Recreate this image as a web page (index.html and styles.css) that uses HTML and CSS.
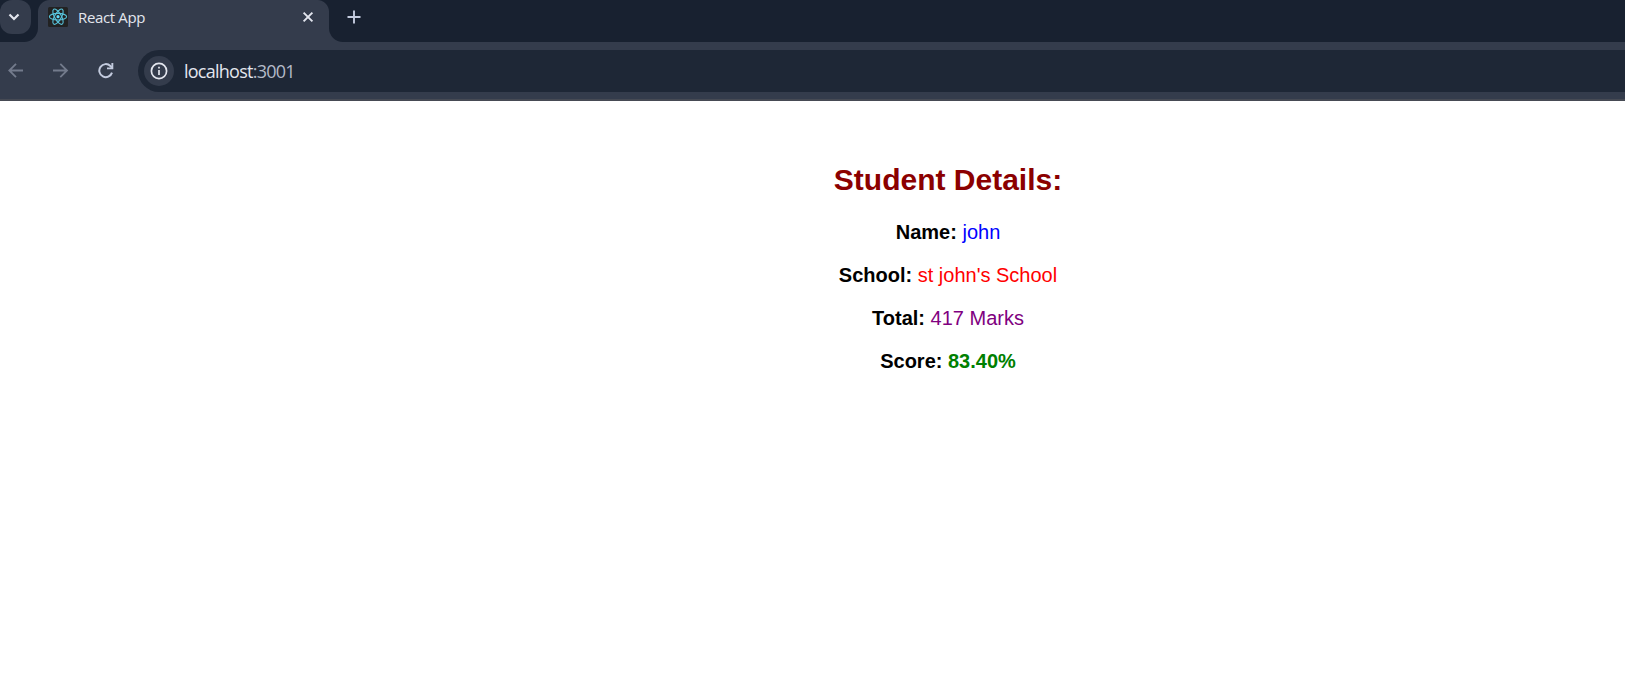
FILE: index.html
```html
<!DOCTYPE html>
<html lang="en">
<head>
<meta charset="utf-8">
<title>React App</title>
<link rel="stylesheet" href="styles.css">
</head>
<body>
<header class="browser">
  <div class="tab-strip">
    <div class="strip-left">
      <div class="tab-search">
        <svg width="31" height="34" viewBox="0 0 31 34"><path d="M9.5 14.5l4.5 4.5 4.5-4.5" fill="none" stroke="#e3e6ee" stroke-width="2.2"/></svg>
      </div>
    </div>
    <div class="tab">
      <svg class="favicon" width="20" height="20" viewBox="0 0 20 20">
        <rect width="20" height="20" rx="1.5" fill="#222"/>
        <g fill="none" stroke="#58c4dc" stroke-width="1.1">
          <ellipse cx="10" cy="9.7" rx="8.6" ry="3.3"/>
          <ellipse cx="10" cy="9.7" rx="8.6" ry="3.3" transform="rotate(60 10 9.7)"/>
          <ellipse cx="10" cy="9.7" rx="8.6" ry="3.3" transform="rotate(120 10 9.7)"/>
        </g>
        <circle cx="10" cy="9.7" r="1.6" fill="#61dafb"/>
      </svg>
      <span class="tab-title">React App</span>
      <svg class="close" width="12" height="12" viewBox="0 0 12 12"><path d="M1.6 1.6l8.8 8.8M10.4 1.6l-8.8 8.8" stroke="#e3e6ee" stroke-width="1.9"/></svg>
    </div>
    <div class="strip-right">
      <svg class="plus" width="14" height="14" viewBox="0 0 14 14"><path d="M7 .5v13M.5 7h13" stroke="#c3cbde" stroke-width="1.9"/></svg>
    </div>
  </div>
  <div class="toolbar">
    <svg class="nav" width="16" height="16" viewBox="0 0 16 16"><path d="M15 7.5H1.5M8 .8L1.3 7.5 8 14.2" fill="none" stroke="#737b8c" stroke-width="1.8"/></svg>
    <svg class="nav" width="16" height="16" viewBox="0 0 16 16"><path d="M0 7.5h14M7.3 .8L14 7.5 7.3 14.2" fill="none" stroke="#737b8c" stroke-width="1.8"/></svg>
    <svg class="nav" width="16" height="16" viewBox="0 0 16 16"><path d="M14 9.6A6.5 6.5 0 1 1 12.4 3L14 4.6" fill="none" stroke="#c3cbde" stroke-width="2"/><path d="M15.3 0v6.3H9V4.4h4.4V0z" fill="#c3cbde"/></svg>
    <div class="address">
      <div class="info">
        <svg width="18" height="18" viewBox="0 0 18 18"><circle cx="9" cy="9" r="7.6" fill="none" stroke="#e3e6ee" stroke-width="1.7"/><path d="M9 8v5M9 4.8v1.8" stroke="#e3e6ee" stroke-width="1.7"/></svg>
      </div>
      <span class="url">localhost<span class="port">:3001</span></span>
    </div>
  </div>
</header>
<main class="page">
  <h2 class="title">Student Details:</h2>
  <p class="row"><b>Name:</b> <span class="name">john</span></p>
  <p class="row"><b>School:</b> <span class="school">st john's School</span></p>
  <p class="row"><b>Total:</b> <span class="total">417 Marks</span></p>
  <p class="row"><b>Score:</b> <b class="score">83.40%</b></p>
</main>
</body>
</html>
```
FILE: styles.css
```css
body {
  margin: 0;
  background: #fff;
}
svg {
  display: block;
  flex: none;
}
.browser {
  font-family: "Open Sans", "Noto Sans", sans-serif;
  background: #343c4c;
  border-bottom: 2px solid #464a54;
  height: 99px;
}
.tab-strip {
  display: flex;
  height: 42px;
}
.strip-left {
  width: 38px;
  background: #182130;
  border-bottom-right-radius: 14px;
}
.tab-search {
  width: 31px;
  height: 34px;
  background: #343c4c;
  border-radius: 12px;
}
.tab {
  display: flex;
  align-items: center;
  box-sizing: border-box;
  width: 291px;
  height: 34px;
  padding: 0 15px 0 10px;
  background:
    radial-gradient(circle at 12px 12px, #343c4c 11.5px, #182130 12.5px) 0 0 / 12px 12px no-repeat,
    radial-gradient(circle at 0 12px, #343c4c 11.5px, #182130 12.5px) 100% 0 / 12px 12px no-repeat;
}
.tab-title {
  flex: 1;
  margin-left: 10px;
  font-size: 15px;
  line-height: 20px;
  letter-spacing: -0.35px;
  color: #e3e6ee;
}
.strip-right {
  flex: 1;
  padding: 10px 0 0 18px;
  background: #182130;
  border-bottom-left-radius: 14px;
}
.toolbar {
  display: flex;
  align-items: center;
  height: 42px;
  padding: 8px 0 7px 8px;
}
.nav {
  margin-right: 29px;
}
.address {
  flex: 1;
  display: flex;
  align-items: center;
  height: 42px;
  margin-left: -5px;
  padding-left: 6px;
  background: #1e2736;
  border-radius: 21px 0 0 21px;
}
.info {
  display: flex;
  align-items: center;
  justify-content: center;
  width: 30px;
  height: 30px;
  border-radius: 50%;
  background: #343c4c;
}
.url {
  margin-left: 10px;
  font-size: 18px;
  letter-spacing: -0.75px;
  color: #e3e6ee;
}
.port {
  color: #b4bac8;
}
.page {
  padding: 62px 0 0 271px;
  font-family: "Liberation Sans", Arial, sans-serif;
  font-size: 20px;
  line-height: 23px;
  text-align: center;
  color: #000;
}
.title {
  margin: 0 0 24px;
  font-size: 30px;
  line-height: 34px;
  color: #8b0000;
}
.row {
  margin: 0 0 20px;
}
.name {
  color: blue;
}
.school {
  color: red;
}
.total {
  color: purple;
}
.score {
  color: green;
}
```
